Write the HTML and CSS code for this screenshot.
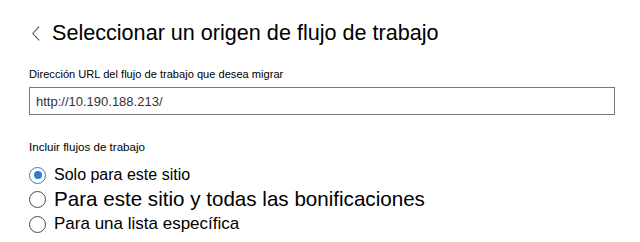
FILE: index.html
```html
<!DOCTYPE html>
<html lang="es">
<head>
    <meta charset="UTF-8">
    <title>Seleccionar un origen de flujo de trabajo</title>
    <link rel="stylesheet" href="styles.css">
</head>
<body>
    <div class="panel">
        <div class="header">
            <svg class="back" width="8" height="15" viewBox="0 0 8 15">
                <path d="M7.2 0.6 L0.8 7.5 L7.2 14.4" fill="none" stroke="#555" stroke-width="1.1"/>
            </svg>
            <h1>Seleccionar un origen de flujo de trabajo</h1>
        </div>

        <label class="field-label" for="url">Dirección URL del flujo de trabajo que desea migrar</label>
        <input type="text" id="url" class="url-input" value="http://10.190.188.213/">

        <div class="group-label">Incluir flujos de trabajo</div>
        <div class="options">
            <label class="option first">
                <span class="radio checked"></span>
                <span class="text">Solo para este sitio</span>
            </label>
            <label class="option big">
                <span class="radio"></span>
                <span class="text">Para este sitio y todas las bonificaciones</span>
            </label>
            <label class="option last">
                <span class="radio"></span>
                <span class="text">Para una lista específica</span>
            </label>
        </div>
    </div>
</body>
</html>
```

FILE: styles.css
```css
body {
    margin: 0;
    padding: 0;
    background-color: #fff;
    color: #000;
    font-family: "Liberation Sans", Arial, sans-serif;
}
.panel {
    padding: 19px 26px 0 29px;
}
.header {
    display: flex;
    align-items: center;
    gap: 12px;
    height: 28px;
    margin-bottom: 20px;
}
.back {
    margin-left: 3px;
}
h1 {
    margin: 0;
    font-size: 21.6px;
    font-weight: normal;
    color: #000;
}
.field-label {
    display: block;
    font-size: 11.1px;
    line-height: 14px;
    color: #000;
    margin-bottom: 6px;
}
.url-input {
    display: block;
    box-sizing: border-box;
    width: 586px;
    height: 28px;
    margin: 0;
    padding: 0 6px;
    border: 1px solid #7a7a7a;
    font-family: inherit;
    font-size: 13px;
    color: #333;
    outline: none;
}
.group-label {
    margin-top: 25px;
    font-size: 11.6px;
    line-height: 14px;
    color: #000;
}
.options {
    margin-top: 9px;
}
.option {
    display: flex;
    align-items: center;
    gap: 8px;
    height: 24px;
    font-size: 16px;
}
.option.big {
    height: 24px;
    font-size: 20.6px;
}
.option.last {
    height: 26px;
    font-size: 17px;
}
.radio {
    box-sizing: border-box;
    width: 17px;
    height: 17px;
    border: 1px solid #4a4a4a;
    border-radius: 50%;
    position: relative;
    flex-shrink: 0;
}
.radio.checked {
    border-color: #2b7bd8;
}
.radio.checked::after {
    content: '';
    position: absolute;
    left: 3.5px;
    top: 3.5px;
    width: 8px;
    height: 8px;
    border-radius: 50%;
    background-color: #2b7bd8;
}
```
